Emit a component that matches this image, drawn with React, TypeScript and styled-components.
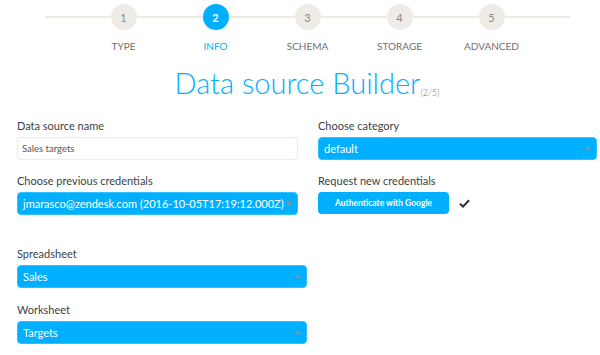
import React, { FC } from "react";
import styled, { createGlobalStyle } from "styled-components";

const colors = {
  blue: "#00b0ff",
  text: "#3a3f45",
  muted: "#6f6f6f",
  track: "#ece9e3",
};

const GlobalStyle = createGlobalStyle`
  body {
    margin: 0;
    background: #fff;
    font-family: Lato, "Open Sans", sans-serif;
    color: ${colors.text};
  }
`;

const Page = styled.div`
  width: 600px;
  padding: 0 3px 0 17px;
  box-sizing: border-box;
`;

const Stepper = styled.div`
  position: relative;
  width: 525px;
  margin-left: 28px;
  display: flex;
  justify-content: center;

  &::before {
    content: "";
    position: absolute;
    left: 0;
    right: 0;
    top: 16px;
    height: 2px;
    background: ${colors.track};
  }
`;

const Step = styled.div`
  width: 92px;
  display: flex;
  flex-direction: column;
  align-items: center;
  position: relative;
`;

const Circle = styled.div<{ active?: boolean }>`
  width: 26px;
  height: 26px;
  margin-top: 4px;
  border-radius: 50%;
  display: flex;
  align-items: center;
  justify-content: center;
  font-size: 11px;
  font-weight: ${(p) => (p.active ? 700 : 400)};
  color: ${(p) => (p.active ? "#fff" : "#8a8a8a")};
  background: ${(p) => (p.active ? colors.blue : "#efece7")};
`;

const StepLabel = styled.div<{ active?: boolean }>`
  margin-top: 10px;
  font-size: 10px;
  line-height: 12px;
  color: ${(p) => (p.active ? colors.blue : "#6f6f6f")};
`;

const Title = styled.h1`
  margin: 15px 0 10px;
  text-align: center;
  font-size: 29px;
  line-height: 32px;
  font-weight: 300;
  color: ${colors.blue};
`;

const Count = styled.sub`
  font-size: 9px;
  color: ${colors.muted};
  vertical-align: -2px;
`;

const Grid = styled.div`
  display: grid;
  grid-template-columns: 281px 1fr;
  column-gap: 20px;
  row-gap: 14px;
`;

const Group = styled.div`
  display: flex;
  flex-direction: column;
`;

const Label = styled.label`
  font-size: 11px;
  line-height: 14px;
  margin-bottom: 4px;
  color: ${colors.text};
`;

const TextInput = styled.input`
  height: 23px;
  box-sizing: border-box;
  border: 1px solid #ebebeb;
  border-radius: 3px;
  padding: 0 4px;
  font-family: inherit;
  font-size: 9.5px;
  color: #555;
  outline: none;
`;

const Select = styled.div`
  position: relative;
  height: 23px;
  box-sizing: border-box;
  border: 1px solid #2fc0ff;
  border-radius: 4px;
  background: ${colors.blue};
  color: #fff;
  font-size: 11px;
  padding: 0 20px 0 5px;
  display: flex;
  align-items: center;
  white-space: nowrap;
  overflow: hidden;
`;

const Arrow = styled.span`
  position: absolute;
  right: 5px;
  top: 9px;
  border-left: 3px solid transparent;
  border-right: 3px solid transparent;
  border-top: 4px solid #8f8f8f;
`;

const ButtonRow = styled.div`
  display: flex;
  align-items: center;
  gap: 10px;
`;

const Button = styled.button`
  width: 131px;
  height: 22px;
  border: none;
  border-radius: 4px;
  background: ${colors.blue};
  color: #fff;
  font-family: inherit;
  font-size: 8.5px;
  font-weight: 700;
  cursor: pointer;
`;

const Lower = styled.div`
  width: 290px;
  margin-top: 32px;
  display: flex;
  flex-direction: column;
  gap: 15px;
`;

const Dropdown: FC<{ value: string }> = ({ value }) => (
  <Select>
    {value}
    <Arrow />
  </Select>
);

const steps = ["Type", "Info", "Schema", "Storage", "Advanced"];

const App: FC = () => {
  const current = 1;

  return (
    <>
      <GlobalStyle />
      <Page>
        <Stepper>
          {steps.map((s, i) => (
            <Step key={s}>
              <Circle active={i === current}>{i + 1}</Circle>
              <StepLabel active={i === current}>{s.toUpperCase()}</StepLabel>
            </Step>
          ))}
        </Stepper>

        <Title>
          Data source Builder<Count>(2/5)</Count>
        </Title>

        <Grid>
          <Group>
            <Label>Data source name</Label>
            <TextInput defaultValue="Sales targets" />
          </Group>
          <Group>
            <Label>Choose category</Label>
            <Dropdown value="default" />
          </Group>
          <Group>
            <Label>Choose previous credentials</Label>
            <Dropdown value="jmarasco@zendesk.com (2016-10-05T17:19:12.000Z)" />
          </Group>
          <Group>
            <Label>Request new credentials</Label>
            <ButtonRow>
              <Button>Authenticate with Google</Button>
              <svg width="11" height="9" viewBox="0 0 11 9">
                <path
                  d="M1 4.8 L4 7.6 L10 1.2"
                  fill="none"
                  stroke="#27303b"
                  strokeWidth="2"
                />
              </svg>
            </ButtonRow>
          </Group>
        </Grid>

        <Lower>
          <Group>
            <Label>Spreadsheet</Label>
            <Dropdown value="Sales" />
          </Group>
          <Group>
            <Label>Worksheet</Label>
            <Dropdown value="Targets" />
          </Group>
        </Lower>
      </Page>
    </>
  );
};

export default App;
